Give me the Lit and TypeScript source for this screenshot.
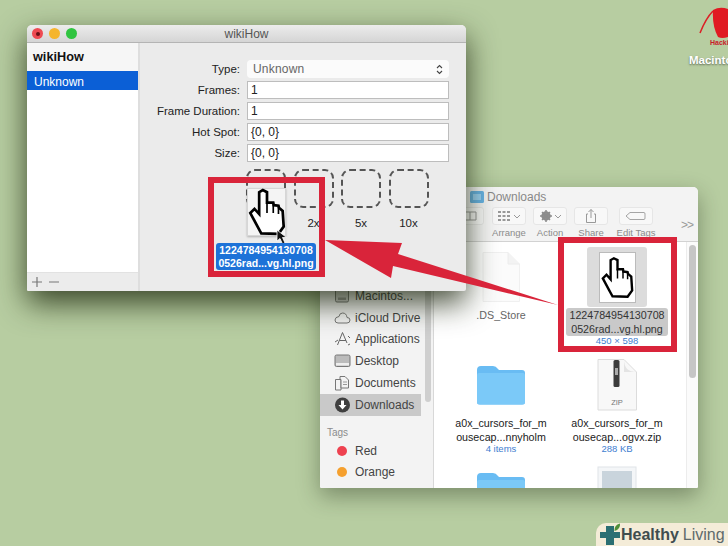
import { LitElement, html, css, svg } from "lit";
import { customElement } from "lit/decorators.js";

const hand = (cls: string) => html`<svg class=${cls} viewBox="-2 -2 36 46">
  <path d="M10.5 41.5 L7 35 L0 22 L4 18 L8.5 23 L8.5 2 L12 0 L16 2 L16 12 L22 12 L22.5 14.5 L27 15 L27.5 17 L31 20 L32 35 L27 42 Z"
    fill="#fff" stroke="#000" stroke-width="2.6" stroke-linejoin="miter"/>
  <path d="M16 12 V22 M22 13 V22 M27 16 V23" fill="none" stroke="#000" stroke-width="1.6"/>
</svg>`;

const folder = (cls: string) => html`<svg class=${cls} viewBox="0 0 50 40">
  <path d="M1 5 Q1 1 5 1 H17 Q20 1 22 4 L23 5 H46 Q49 5 49 8 V37 Q49 39.500 46 39.500 H4 Q1 39.500 1 37 Z" fill="#69bcf3"/>
  <rect x="1" y="8" width="48" height="31.500" rx="2" fill="#7bc9f8"/>
</svg>`;

const sideIcons: Record<string, unknown> = {
  disk: svg`<rect x="1.500" y="1" width="13" height="13" rx="1.500" fill="#d6d6d6" stroke="#777"/><rect x="4" y="9.500" width="8" height="2.500" fill="#999"/>`,
  cloud: svg`<path d="M4 13 H13 Q16 13 16 10 Q16 7.500 13 7.500 Q12.500 3 8.500 3 Q5.500 3 5 6.500 Q1 7 1 10 Q1 13 4 13 Z" fill="none" stroke="#777"/>`,
  apps: svg`<path d="M8.500 1.500 L3.500 14 M8.500 1.500 L13 12 M5.500 9.500 H12 M1 11 L4 9 M14 5 L16 7 M14 14 L16 13" fill="none" stroke="#666"/>`,
  desk: svg`<rect x="1" y="2" width="15" height="11.500" rx="1.500" fill="#bbb" stroke="#777"/><rect x="2" y="10" width="13" height="2.500" fill="#eee"/>`,
  docs: svg`<path d="M1.500 4.500 H7 V15 H1.500 Z" fill="#f3f3f3" stroke="#777"/><path d="M6 1.500 H11 L14.500 5 V13 H7 V4.500 H6 Z" fill="#f3f3f3" stroke="#777"/><path d="M9 7 H13 M9 9.500 H13" stroke="#999"/>`,
  down: svg`<circle cx="8.500" cy="8" r="7.500" fill="#3f3f3f"/><path d="M7 3.500 H10 V8 H12.500 L8.500 12.500 L4.500 8 H7 Z" fill="#fff"/>`,
};

const sideItems = [
  { icon: "disk", label: "Macintos...", sel: false },
  { icon: "cloud", label: "iCloud Drive", sel: false },
  { icon: "apps", label: "Applications", sel: false },
  { icon: "desk", label: "Desktop", sel: false },
  { icon: "docs", label: "Documents", sel: false },
  { icon: "down", label: "Downloads", sel: true },
];

@customElement("app-root")
export class AppRoot extends LitElement {
  static styles = css`
    :host { display: block; }
    * { box-sizing: border-box; }
    .desk {
      position: relative; width: 728px; height: 546px; overflow: hidden;
      background: #b7cda1; color: #222;
      font-family: "Liberation Sans", Arial, sans-serif; font-size: 12px;
    }
    .win { position: absolute; display: flex; flex-direction: column; overflow: hidden; border-radius: 5px 5px 2px 2px; }
    .inspector {
      left: 27px; top: 25px; width: 439px; height: 266px; background: #ebebeb; z-index: 2;
      box-shadow: 0 12px 30px rgba(25,35,10,.8);
    }
    .finder {
      left: 320px; top: 187px; width: 378px; height: 301px; background: #f2f2f2; z-index: 1;
      box-shadow: 0 8px 22px rgba(30,40,20,.4);
    }
    .titlebar {
      flex: none; height: 18px; display: flex; align-items: center; justify-content: center; position: relative;
      background: linear-gradient(#ececec, #d5d5d5); border-bottom: 1px solid #b4b4b4; color: #555;
    }
    .lights { position: absolute; left: 5px; top: 3px; display: flex; gap: 6px; }
    .light { width: 11px; height: 11px; border-radius: 50%; display: flex; align-items: center; justify-content: center; }
    .light.r { background: #ee4a52; } .light.y { background: #f5b52e; } .light.g { background: #30c440; }
    .light.r::after { content: ""; width: 4px; height: 4px; border-radius: 50%; background: #6a1016; }
    .ins-body { flex: 1; display: flex; min-height: 0; }
    .ins-side { width: 113px; display: flex; flex-direction: column; background: #fff; border-right: 2px solid #dedede; }
    .ins-head { height: 28px; padding: 7px 6px 0; background: #f6f6f6; font-weight: bold; font-size: 12.700px; color: #111; }
    .ins-sel { height: 19px; padding: 4px 7px 0; background: #0b5fd6; color: #fff; font-size: 12px; line-height: 15px; }
    .ins-fill { flex: 1; }
    .ins-foot { height: 19px; background: #ececec; border-top: 1px solid #e2e2e2; padding-left: 4px; display: flex; align-items: center; gap: 5px; }
    .ins-foot svg { width: 12px; height: 12px; }
    .ins-main { flex: 1; padding-top: 17px; }
    .form { display: grid; grid-template-columns: 100px 202px; column-gap: 7px; row-gap: 3px; }
    .lbl { text-align: right; line-height: 18px; color: #222; white-space: nowrap; font-size: 11.500px; }
    .select {
      height: 18px; background: #fbfbfb; border-radius: 4px; padding: 0 6px; line-height: 19px; color: #666;
      display: flex; justify-content: space-between; align-items: center; letter-spacing: .2px;
    }
    .select svg { width: 7px; height: 11px; }
    .field { height: 18px; background: #fff; border: 1.500px solid #bdbdbd; padding-left: 3px; line-height: 17px; color: #222; }
    .wells { display: flex; gap: 7.500px; margin: 7px 0 0 106px; }
    .well { width: 40px; display: flex; flex-direction: column; align-items: center; position: relative; }
    .dash { width: 40px; height: 39px; border: 2px dashed #555; border-radius: 9px; }
    .wtext { margin-top: 8px; color: #222; font-size: 11.500px; line-height: 14px; height: 14px; }
    .wtext.ghost { color: transparent; }
    .thumb {
      position: absolute; left: 1px; top: 19px; width: 39px; height: 48px; background: #f4f4f4;
      border: 1px solid #d6d6d6; box-shadow: 0 1px 2px rgba(0,0,0,.25);
      display: flex; align-items: flex-end; justify-content: center;
      color: #ccc; font-size: 11px; padding-bottom: 6px;
    }
    .hand-a { position: absolute; left: 2px; top: 19px; width: 38px; height: 48px; }
    .arrow-c { position: absolute; left: 30px; top: 60px; width: 12px; height: 16px; }
    .name {
      position: absolute; left: -30px; top: 74px; width: 100px; height: 27px; background: #1d72d8; border-radius: 3px;
      color: #fff; font-size: 10.500px; line-height: 13px; text-align: center; padding-top: 1px; font-weight: bold; white-space: nowrap;
    }
    .f-title { flex: none; height: 20px; display: flex; align-items: center; padding-left: 150px; gap: 3px; color: #888; background: #f3f3f3; }
    .f-title svg { width: 14px; height: 12px; }
    .toolbar { flex: none; height: 35px; display: flex; padding-left: 130px; background: #f3f3f3; border-bottom: 1px solid #d2d2d2; position: relative; }
    .tool { width: 34px; display: flex; flex-direction: column; align-items: center; margin-right: 7px; }
    .tool.first { margin-right: 8px; }
    .tool.wide { margin-right: 11px; }
    .tbtn { width: 34px; height: 18px; background: #f8f8f8; border: 1px solid #e6e6e6; border-radius: 3px; display: flex; align-items: center; justify-content: center; }
    .tbtn svg { width: 26px; height: 14px; }
    .tlabel { margin-top: 2px; font-size: 9.500px; line-height: 12px; color: #8b8b8b; white-space: nowrap; }
    .more { position: absolute; left: 361px; top: 11px; color: #999; font-size: 12px; letter-spacing: -1px; }
    .f-body { flex: 1; display: flex; min-height: 0; background: #fff; }
    .f-side { flex: none; width: 114px; background: #f3f3f3; border-right: 1px solid #d8d8d8; padding-top: 43px; position: relative; }
    .s-row { height: 21.800px; width: 101px; display: flex; align-items: center; gap: 4px; padding-left: 14px; color: #444; white-space: nowrap; }
    .s-row.sel { background: #c9c9c9; }
    .s-row svg { flex: none; width: 17px; height: 16px; }
    .s-tags { margin: 9px 0 0 7px; height: 15px; font-size: 10px; line-height: 15px; color: #8c8c8c; }
    .s-row.tag { padding-left: 17px; gap: 8px; }
    .dot { flex: none; width: 10px; height: 10px; border-radius: 50%; }
    .dot.red { background: #ee4250; } .dot.orange { background: #f5a02e; }
    .s-thumb { position: absolute; right: 2px; top: 0; width: 6px; height: 160px; border-radius: 3px; background: #cfcfcf; }
    .grid { flex: 1; display: grid; grid-template-columns: 116px 116px; grid-auto-rows: 107.500px; padding-left: 9px; overflow: hidden; align-content: start; padding-top: 2px; }
    .cell { display: flex; flex-direction: column; align-items: center; text-align: center; padding-top: 3px; font-size: 10.700px; line-height: 14px; color: #222; }
    .ibox { flex: none; width: 60px; height: 60px; display: flex; align-items: center; justify-content: center; margin-bottom: 1px; position: relative; }
    .ibox.sel { background: #dcdcdc; border-radius: 3px; }
    .doc { width: 38px; height: 50px; }
    .fold { width: 50px; height: 40px; }
    .zip { width: 40px; height: 52px; }
    .img-thumb { width: 40px; height: 52px; }
    .shot { width: 37px; height: 51px; background: #fff; border: 1px solid #bbb; display: flex; align-items: center; justify-content: center; }
    .hand-b { width: 33px; height: 43px; }
    .fname { white-space: nowrap; }
    .fname.sel { background: #c9c9c9; border-radius: 3px; padding: 0 3px; color: #333; }
    .fname.pale { color: #666; }
    .sub { font-size: 9.500px; line-height: 10px; color: #3f7ed0; }
    .rail { flex: none; width: 12px; background: #fbfbfb; border-left: 1px solid #ececec; padding: 3px 0 0 2px; }
    .rail div { width: 7px; height: 133px; border-radius: 4px; background: #c6c6c6; }
    .redbox { position: absolute; border: 6px solid #d9243a; z-index: 3; }
    .rb-a { left: 208px; top: 177px; width: 117px; height: 100px; }
    .rb-b { left: 558px; top: 237px; width: 119px; height: 115px; }
    .overlay { position: absolute; left: 0; top: 0; width: 728px; height: 546px; z-index: 4; pointer-events: none; }
    .logo { position: absolute; left: 698px; top: 6px; width: 30px; height: 32px; }
    .hack { position: absolute; left: 710px; top: 39px; font-size: 7px; line-height: 8px; font-weight: bold; color: #c8202a; white-space: nowrap; }
    .mac { position: absolute; left: 689px; top: 53px; font-size: 11.500px; line-height: 14px; font-weight: bold; color: #fff; white-space: nowrap; text-shadow: 0 1px 2px rgba(0,0,0,.5); }
    .badge {
      position: absolute; left: 596px; top: 523px; width: 132px; height: 23px; background: #f4ecd8;
      border-radius: 10px 0 0 0; display: flex; align-items: center; padding-left: 3px; z-index: 5;
      font-size: 16px; color: #3f4d4f;
    }
    .badge svg { flex: none; width: 22px; height: 23px; margin-right: 0; }
    .badge b { margin-right: 4px; }
    .badge span { color: #5f6a6b; }
  `;

  render() {
    return html`<div class="desk">
      <svg class="logo" viewBox="0 0 30 32">
        <path d="M15 5 Q8 12 2 27" fill="none" stroke="#dc1f26" stroke-width="1.500"/>
        <path d="M15 4 Q22 0 30 3 V31 Q24 33 20 31 Q14 20 15 4 Z" fill="#e01a22"/>
      </svg>
      <div class="hack">Hackint</div>
      <div class="mac">Macintos</div>

      <section class="win-shell">
      <section class="win finder">
        <div class="f-title">
          <svg viewBox="0 0 14 12"><rect width="14" height="12" rx="1.500" fill="#68b4e6"/><rect x="3" y="3" width="8" height="6" fill="#9ad2f4"/></svg>
          Downloads
        </div>
        <div class="toolbar">
          <div class="tool first"><div class="tbtn"><svg viewBox="0 0 26 14"><path d="M4 3 H22 V11 H4 Z M10 3 V11 M16 3 V11" fill="none" stroke="#999"/></svg></div></div>
          <div class="tool"><div class="tbtn"><svg viewBox="0 0 26 14"><path d="M2 3 H14 M2 7 H14 M2 11 H14" stroke="#999" stroke-width="2" stroke-dasharray="3 1.500"/><path d="M18 6 L21 9 L24 6" fill="none" stroke="#999"/></svg></div><div class="tlabel">Arrange</div></div>
          <div class="tool"><div class="tbtn"><svg viewBox="0 0 26 14"><circle cx="9" cy="7" r="3.500" fill="none" stroke="#8c8c8c" stroke-width="2.500"/><path d="M9 1 V13 M3 7 H15 M5 3 L13 11 M13 3 L5 11" stroke="#8c8c8c" stroke-width="1.500"/><path d="M18 6 L21 9 L24 6" fill="none" stroke="#999"/></svg></div><div class="tlabel">Action</div></div>
          <div class="tool wide"><div class="tbtn"><svg viewBox="0 0 26 14"><path d="M10 5 H8.500 V13.500 H17.500 V5 H16 M13 9 V0.500 M10.500 3 L13 0.500 L15.500 3" fill="none" stroke="#999"/></svg></div><div class="tlabel">Share</div></div>
          <div class="tool"><div class="tbtn"><svg viewBox="0 0 26 14"><path d="M7 3.500 H21 Q22 3.500 22 5 V9 Q22 10.500 21 10.500 H7 L3 7 Z" fill="none" stroke="#a5a5a5"/></svg></div><div class="tlabel">Edit Tags</div></div>
          <div class="more">&gt;&gt;</div>
        </div>
        <div class="f-body">
          <aside class="f-side">
            <div class="s-thumb"></div>
            ${sideItems.map((i) => html`<div class="s-row ${i.sel ? "sel" : ""}"><svg viewBox="0 0 17 16">${sideIcons[i.icon]}</svg>${i.label}</div>`)}
            <div class="s-tags">Tags</div>
            <div class="s-row tag"><i class="dot red"></i>Red</div>
            <div class="s-row tag"><i class="dot orange"></i>Orange</div>
          </aside>
          <div class="grid">
            <div class="cell">
              <div class="ibox"><svg class="doc" viewBox="0 0 38 50"><path d="M1 0.500 H26 L37.500 12 V49.500 H1 Z" fill="#fbfbfb" stroke="#f0f0f0"/><path d="M26 0.500 V12 H37.500" fill="#f3f3f3" stroke="#ececec"/></svg></div>
              <div class="fname pale">.DS_Store</div>
            </div>
            <div class="cell">
              <div class="ibox sel"><div class="shot">${hand("hand-b")}</div></div>
              <div class="fname sel">1224784954130708<br />0526rad...vg.hl.png</div>
              <div class="sub">450 × 598</div>
            </div>
            <div class="cell">
              <div class="ibox">${folder("fold")}</div>
              <div class="fname">a0x_cursors_for_m<br />ousecap...nnyholm</div>
              <div class="sub">4 items</div>
            </div>
            <div class="cell">
              <div class="ibox"><svg class="zip" viewBox="0 0 40 52">
                <path d="M1 0.500 H27 L39.500 13 V51 H1 Z" fill="#f8f8f8" stroke="#dcdcdc"/>
                <path d="M27 0.500 Q27 13 39.500 13 L27 13 Z" fill="#e4e4e4"/>
                <rect x="16.500" y="1" width="6" height="27" rx="1.500" fill="#3c3c3c"/>
                <rect x="18" y="9" width="3" height="7" fill="#aaa"/>
                <text x="20" y="46" font-size="7.500" text-anchor="middle" fill="#777" font-family="Liberation Sans">ZIP</text>
              </svg></div>
              <div class="fname">a0x_cursors_for_m<br />ousecap...ogvx.zip</div>
              <div class="sub">288 KB</div>
            </div>
            <div class="cell"><div class="ibox">${folder("fold")}</div></div>
            <div class="cell"><div class="ibox"><svg class="img-thumb" viewBox="0 0 40 52"><rect x="1" y="1" width="38" height="50" fill="#f4f6f8" stroke="#e0e4e8"/><rect x="5" y="5" width="30" height="40" fill="#c9d4dc"/></svg></div></div>
          </div>
          <div class="rail"><div></div></div>
        </div>
      </section>

      <section class="win inspector">
        <div class="titlebar">
          <div class="lights"><i class="light r"></i><i class="light y"></i><i class="light g"></i></div>
          wikiHow
        </div>
        <div class="ins-body">
          <aside class="ins-side">
            <div class="ins-head">wikiHow</div>
            <div class="ins-sel">Unknown</div>
            <div class="ins-fill"></div>
            <div class="ins-foot">
              <svg viewBox="0 0 12 12"><path d="M6 1 V11 M1 6 H11" stroke="#777" stroke-width="1.200"/></svg>
              <svg viewBox="0 0 12 12"><path d="M1 6 H11" stroke="#777" stroke-width="1.200"/></svg>
            </div>
          </aside>
          <div class="ins-main">
            <div class="form">
              <div class="lbl">Type:</div>
              <div class="select">Unknown
                <svg viewBox="0 0 7 11"><path d="M1 4 L3.500 1.500 L6 4 M1 7 L3.500 9.500 L6 7" fill="none" stroke="#444" stroke-width="1.100"/></svg>
              </div>
              <div class="lbl">Frames:</div><div class="field">1</div>
              <div class="lbl">Frame Duration:</div><div class="field">1</div>
              <div class="lbl">Hot Spot:</div><div class="field">{0, 0}</div>
              <div class="lbl">Size:</div><div class="field">{0, 0}</div>
            </div>
            <div class="wells">
              <div class="well">
                <div class="dash"></div>
                <div class="wtext ghost">1x</div>
                <div class="thumb">1x</div>
                ${hand("hand-a")}
                <svg class="arrow-c" viewBox="0 0 12 16"><path d="M1 1 L1 12 L4 9.500 L6.500 15 L9 14 L6.500 8.500 L10.500 8.500 Z" fill="#111" stroke="#fff" stroke-width=".8"/></svg>
                <div class="name">1224784954130708<br />0526rad...vg.hl.png</div>
              </div>
              <div class="well"><div class="dash"></div><div class="wtext">2x</div></div>
              <div class="well"><div class="dash"></div><div class="wtext">5x</div></div>
              <div class="well"><div class="dash"></div><div class="wtext">10x</div></div>
            </div>
          </div>
        </div>
      </section>
      </section>

      <div class="redbox rb-a"></div>
      <div class="redbox rb-b"></div>
      <svg class="overlay" viewBox="0 0 728 546">
        <polygon points="325,240 402,243 398,254 558,305 393,266 391,278" fill="#d9243a"/>
      </svg>

      <div class="badge">
        <svg viewBox="0 0 22 23">
          <path d="M7 3 H15 V9 H21 V15 H15 V22 H7 V15 H1 V9 H7 Z" fill="#2b6f73"/>
          <path d="M15.500 8 Q15 2 21 0.500 Q21.500 6.500 15.500 8 Z" fill="#4f8f3a"/>
        </svg>
        <b>Healthy</b><span>Living</span>
      </div>
    </div>`;
  }
}
